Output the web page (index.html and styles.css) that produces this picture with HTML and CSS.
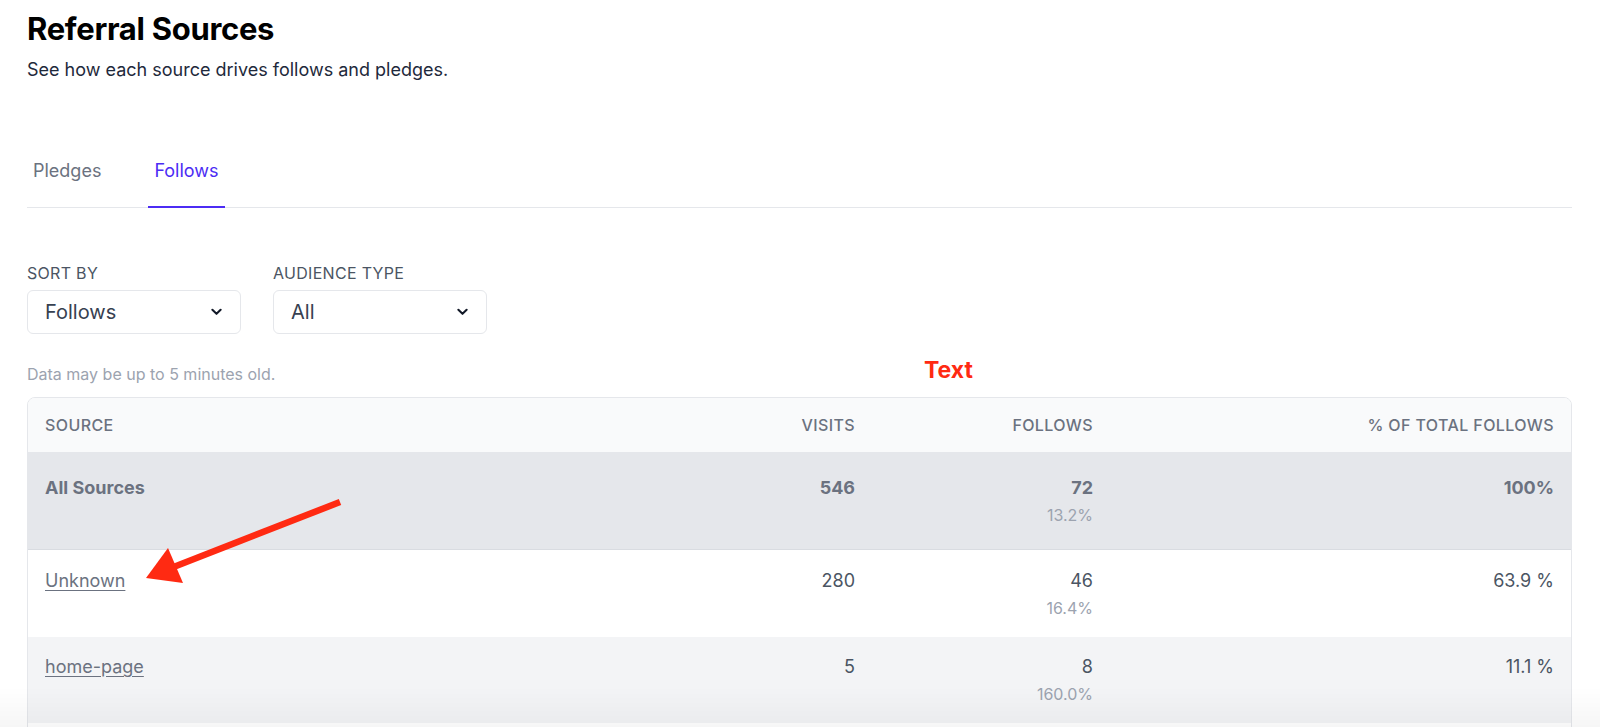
FILE: index.html
```html
<!DOCTYPE html>
<html lang="en">
<head>
<meta charset="utf-8">
<title>Referral Sources</title>
<link rel="stylesheet" href="styles.css">
</head>
<body>
<main class="page">
  <h1 class="title">Referral Sources</h1>
  <p class="subtitle">See how each source drives follows and pledges.</p>

  <nav class="tabs">
    <a class="tab">Pledges</a>
    <a class="tab active">Follows</a>
  </nav>

  <div class="filters">
    <div class="field">
      <label class="field-label">Sort by</label>
      <div class="select">
        <span>Follows</span>
        <svg class="chev" viewBox="0 0 12 8" width="11" height="8"><path d="M1.5 1.5 L6 6 L10.5 1.5" fill="none" stroke="#111827" stroke-width="2.2" stroke-linecap="round" stroke-linejoin="round"/></svg>
      </div>
    </div>
    <div class="field">
      <label class="field-label">Audience type</label>
      <div class="select">
        <span>All</span>
        <svg class="chev" viewBox="0 0 12 8" width="11" height="8"><path d="M1.5 1.5 L6 6 L10.5 1.5" fill="none" stroke="#111827" stroke-width="2.2" stroke-linecap="round" stroke-linejoin="round"/></svg>
      </div>
    </div>
  </div>

  <p class="note">Data may be up to 5 minutes old.</p>

  <div class="table">
    <div class="row head">
      <div class="cell">Source</div>
      <div class="cell num">Visits</div>
      <div class="cell num">Follows</div>
      <div class="cell num">% of total follows</div>
    </div>
    <div class="row total">
      <div class="cell">All Sources</div>
      <div class="cell num">546</div>
      <div class="cell num">72<span class="sub">13.2%</span></div>
      <div class="cell num">100%</div>
    </div>
    <div class="row white">
      <div class="cell"><a class="src">Unknown</a></div>
      <div class="cell num">280</div>
      <div class="cell num">46<span class="sub">16.4%</span></div>
      <div class="cell num">63.9 %</div>
    </div>
    <div class="row grey">
      <div class="cell"><a class="src">home-page</a></div>
      <div class="cell num">5</div>
      <div class="cell num">8<span class="sub">160.0%</span></div>
      <div class="cell num">11.1 %</div>
    </div>
    <div class="row spacer"></div>
  </div>
</main>

<div class="annot-text">Text</div>
<svg class="annot-arrow" width="1600" height="727" viewBox="0 0 1600 727">
  <line x1="340" y1="502" x2="171" y2="568" stroke="#ff2a12" stroke-width="6.5" stroke-linecap="butt"/>
  <polygon points="146,578 168,548 183,583" fill="#ff2a12"/>
</svg>
<div class="fade"></div>
</body>
</html>
```

FILE: styles.css
```css
* { box-sizing: border-box; }

html, body {
  margin: 0;
  padding: 0;
  background: #ffffff;
  font-family: Inter, "Noto Sans", "Liberation Sans", sans-serif;
  color: #111827;
  overflow: hidden;
}

.page {
  padding: 9px 28px 0 27px;
}

.title {
  margin: 0;
  font-size: 31px;
  line-height: 40px;
  font-weight: 700;
  color: #000000;
  letter-spacing: -0.3px;
}

.subtitle {
  margin: 7px 0 0;
  font-size: 18px;
  line-height: 28px;
  color: #1e293b;
}

.tabs {
  display: flex;
  gap: 41px;
  margin-top: 63px;
  border-bottom: 1px solid #e5e7eb;
}

.tab {
  padding: 10px 6px 21px;
  font-size: 18px;
  line-height: 28px;
  color: #6b7280;
  border-bottom: 2px solid transparent;
  margin-bottom: -1px;
}

.tab.active {
  color: #4c2cf4;
  border-bottom-color: #4c2cf4;
}

.filters {
  display: flex;
  gap: 32px;
  margin-top: 53px;
}

.field {
  display: flex;
  flex-direction: column;
  gap: 5px;
}

.field-label {
  font-size: 16px;
  line-height: 24px;
  text-transform: uppercase;
  letter-spacing: 0.3px;
  color: #4b5563;
}

.select {
  width: 214px;
  height: 44px;
  border: 1px solid #e5e7eb;
  border-radius: 6px;
  display: flex;
  align-items: center;
  justify-content: space-between;
  padding: 0 18px 0 17px;
  font-size: 20px;
  color: #374151;
}

.chev { display: block; }

.note {
  margin: 28px 0 0;
  font-size: 16px;
  line-height: 24px;
  color: #9ca3af;
}

.table {
  margin-top: 11px;
  border: 1px solid #e5e7eb;
  border-radius: 8px 8px 0 0;
  overflow: hidden;
}

.row {
  display: grid;
  grid-template-columns: 606px 238px 238px 1fr;
  border-bottom: 1px solid #e5e7eb;
}

.cell {
  padding: 0 17px;
  display: flex;
  flex-direction: column;
  font-size: 18px;
  line-height: 28px;
  color: #4b5563;
}

.cell.num {
  align-items: flex-end;
  text-align: right;
}

.row.head {
  background: #f9fafb;
  padding: 15px 0 15px;
}

.row.head .cell {
  font-size: 16px;
  line-height: 24px;
  font-weight: 500;
  text-transform: uppercase;
  letter-spacing: 0.4px;
  color: #6b7280;
}

.row.total {
  background: #e5e7eb;
  padding: 21px 0 23px;
  border-bottom-color: #d9dce1;
}

.row.total .cell {
  font-weight: 700;
  color: #6b7280;
}

.row.white {
  background: #ffffff;
  padding: 17px 0 18px;
  border-bottom: none;
}

.row.grey {
  background: #f3f4f6;
  padding: 16px 0 18px;
  border-bottom: none;
}

.row.spacer {
  height: 20px;
  background: #ffffff;
  border-bottom: none;
}

.sub {
  margin-top: 2px;
  font-size: 16px;
  line-height: 22px;
  font-weight: 400;
  color: #9ca3af;
}

.src {
  color: #6b7280;
  text-decoration: underline;
  text-underline-offset: 3px;
}

.annot-text {
  position: absolute;
  left: 924px;
  top: 355px;
  font-size: 23px;
  line-height: 30px;
  font-weight: 700;
  color: #ff2a12;
}

.annot-arrow {
  position: absolute;
  left: 0;
  top: 0;
  pointer-events: none;
}

.fade {
  position: fixed;
  left: 0;
  right: 0;
  bottom: 0;
  height: 40px;
  background: linear-gradient(to bottom, rgba(0,0,0,0), rgba(0,0,0,0.035));
  pointer-events: none;
}
```
